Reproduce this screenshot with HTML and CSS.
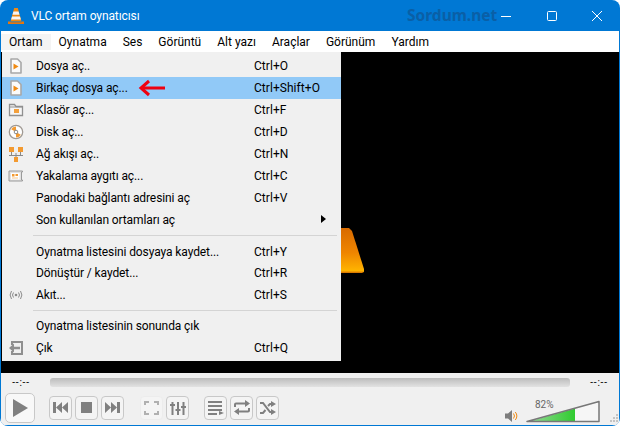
FILE: index.html
```html
<!DOCTYPE html>
<html lang="tr">
<head>
<meta charset="utf-8">
<title>VLC ortam oynatıcısı</title>
<link rel="stylesheet" href="styles.css">
</head>
<body>
<div class="window">
  <header class="titlebar">
    <svg class="app-icon" width="16" height="18" viewBox="0 0 16 18"><path d="M6.200 1h3.600l3.700 13.500h-11z" fill="#f08a12"/><path d="M5.400 4.500h5.200l.9 3.200h-7zM4 9.500h8l.9 3H3.100z" fill="#f6f6f6"/><path d="M0 14.500h2.500v.8h11v-.8H16V17H0z" fill="#e8760c"/></svg>
    <span class="title">VLC ortam oynatıcısı</span>
    <span class="watermark">Sordum.net</span>
    <div class="winbtns">
      <svg width="12" height="12" viewBox="0 0 12 12"><path d="M1 6.500h10" stroke="#fff" fill="none"/></svg>
      <svg width="12" height="12" viewBox="0 0 12 12"><rect x="1.500" y="1.500" width="9" height="9" rx="1" stroke="#fff" fill="none"/></svg>
      <svg width="12" height="12" viewBox="0 0 12 12"><path d="M1 1l10 10M11 1L1 11" stroke="#fff" fill="none"/></svg>
    </div>
  </header>
  <nav class="menubar">
    <span class="mb-item active">Ortam</span><span class="mb-item">Oynatma</span><span class="mb-item">Ses</span><span class="mb-item">Görüntü</span><span class="mb-item">Alt yazı</span><span class="mb-item">Araçlar</span><span class="mb-item">Görünüm</span><span class="mb-item">Yardım</span>
  </nav>
  <main class="video">
    <div class="cone"></div>
    <div class="menu">
      <div class="row"><span class="ico"><svg width="16" height="16" viewBox="0 0 16 16"><path d="M3 1h6.500L13 4.500V15H3z" fill="#fbfbfb" stroke="#a8a8a8" stroke-width="1.600" stroke-linejoin="round"/><path d="M5.500 5.500l5 3-5 3z" fill="#f08a12"/></svg></span><span class="lbl">Dosya aç..</span><span class="key">Ctrl+O</span></div>
      <div class="row hi"><span class="ico"><svg width="16" height="16" viewBox="0 0 16 16"><path d="M3 1h6.500L13 4.500V15H3z" fill="#fbfbfb" stroke="#a8a8a8" stroke-width="1.600" stroke-linejoin="round"/><path d="M5.500 5.500l5 3-5 3z" fill="#f08a12"/></svg></span><span class="lbl">Birkaç dosya aç...</span><span class="key">Ctrl+Shift+O</span>
        <svg class="arrow" width="28" height="18" viewBox="0 0 28 18"><path d="M27 9H5" fill="none" stroke="#ee0010" stroke-width="3"/><path d="M11 2L3 9l8 7" fill="none" stroke="#ee0010" stroke-width="3"/></svg></div>
      <div class="row"><span class="ico"><svg width="16" height="16" viewBox="0 0 16 16"><path d="M1.500 2.500h5l1.500 2h6.500v9h-13z" fill="#f6f6f6" stroke="#909090" stroke-width="1.300"/><path d="M1.500 5h13" stroke="#909090"/><rect x="6" y="7" width="5" height="4" fill="#f3a03c"/></svg></span><span class="lbl">Klasör aç...</span><span class="key">Ctrl+F</span></div>
      <div class="row"><span class="ico"><svg width="16" height="16" viewBox="0 0 16 16"><circle cx="8" cy="8" r="6.700" fill="#fff" stroke="#a09a94" stroke-width="1.300"/><path d="M8 8L3.200 5.200A5.500 5.500 0 0 1 8 2.500zM8 8l4.800 2.800A5.500 5.500 0 0 1 8 13.500z" fill="#f39a30"/><circle cx="8" cy="8" r="1.800" fill="#fff" stroke="#8a8a8a"/></svg></span><span class="lbl">Disk aç...</span><span class="key">Ctrl+D</span></div>
      <div class="row"><span class="ico"><svg width="16" height="16" viewBox="0 0 16 16"><path d="M8 7v5M1 9.500h14M3.500 6v3.500M12.500 6v3.500" stroke="#8a8a8a" fill="none"/><rect x="1" y="1" width="5" height="5" fill="#f39a30"/><rect x="10" y="1" width="5" height="5" fill="#f39a30"/><rect x="6" y="11" width="4" height="5" fill="#f39a30"/></svg></span><span class="lbl">Ağ akışı aç..</span><span class="key">Ctrl+N</span></div>
      <div class="row"><span class="ico"><svg width="16" height="16" viewBox="0 0 16 16"><path d="M1 3h13.500v1h-1v8h1v1H1z" fill="#e2e2e2" stroke="#9a9a9a"/><rect x="3" y="5" width="8.500" height="6.500" fill="#fff"/><rect x="4" y="6" width="2.500" height="2.500" fill="#f39a30"/><rect x="7.500" y="6" width="2.500" height="2" fill="#f39a30"/><rect x="4" y="9.500" width="6" height="1" fill="#f8c88c"/></svg></span><span class="lbl">Yakalama aygıtı aç...</span><span class="key">Ctrl+C</span></div>
      <div class="row"><span class="ico"></span><span class="lbl">Panodaki bağlantı adresini aç</span><span class="key">Ctrl+V</span></div>
      <div class="row"><span class="ico"></span><span class="lbl">Son kullanılan ortamları aç</span><span class="key"></span><span class="sub"></span></div>
      <div class="sep"></div>
      <div class="row"><span class="ico"></span><span class="lbl">Oynatma listesini dosyaya kaydet...</span><span class="key">Ctrl+Y</span></div>
      <div class="row"><span class="ico"></span><span class="lbl">Dönüştür / kaydet...</span><span class="key">Ctrl+R</span></div>
      <div class="row"><span class="ico"><svg width="16" height="16" viewBox="0 0 16 16"><circle cx="8" cy="8" r="1.300" fill="#8a8a8a"/><path d="M5.500 5.500a4 4 0 0 0 0 5M10.500 5.500a4 4 0 0 1 0 5M3.500 4a7 7 0 0 0 0 8M12.500 4a7 7 0 0 1 0 8" fill="none" stroke="#8a8a8a"/></svg></span><span class="lbl">Akıt...</span><span class="key">Ctrl+S</span></div>
      <div class="sep sep2"></div>
      <div class="row"><span class="ico"></span><span class="lbl">Oynatma listesinin sonunda çık</span><span class="key"></span></div>
      <div class="row"><span class="ico"><svg width="16" height="16" viewBox="0 0 16 16"><path d="M4 5V2h10v12H4v-3" fill="none" stroke="#8f8f8f" stroke-width="2"/><path d="M12 6.800H6V3.500L1 8l5 4.500V9.200h6z" fill="#8f8f8f"/></svg></span><span class="lbl">Çık</span><span class="key">Ctrl+Q</span></div>
    </div>
  </main>
  <section class="controls">
    <div class="seekrow">
      <span class="time">--:--</span>
      <div class="seek"></div>
      <span class="time">--:--</span>
    </div>
    <div class="btnrow">
      <button class="btn play"><svg width="15" height="18" viewBox="0 0 15 18"><path d="M0 0l15 9-15 9z" fill="#808080"/></svg></button>
      <div class="group g1">
        <button class="btn"><svg width="15" height="11" viewBox="0 0 15 11"><path d="M0 0h3v11H0zM3 5.500L9 0v11zM9 5.500L15 0v11z" fill="#808080"/></svg></button>
        <button class="btn"><svg width="11" height="11" viewBox="0 0 11 11"><rect width="11" height="11" fill="#808080"/></svg></button>
        <button class="btn"><svg width="15" height="11" viewBox="0 0 15 11"><path d="M15 0h-3v11h3zM12 5.500L6 0v11zM6 5.500L0 0v11z" fill="#808080"/></svg></button>
      </div>
      <div class="group g2">
        <button class="btn dim"><svg width="15" height="14" viewBox="0 0 15 14"><path d="M1 4V1h4M10 1h4v3M14 10v3h-4M5 13H1v-3" fill="none" stroke="#b0b0b0" stroke-width="2"/></svg></button>
        <button class="btn"><svg width="16" height="14" viewBox="0 0 16 14"><path d="M2.500 1v13M8 1v13M13.500 1v13" stroke="#808080" stroke-width="2"/><path d="M0 3h5v2H0zM5.500 8h5v2h-5zM11 5h5v2h-5z" fill="#808080"/></svg></button>
      </div>
      <div class="group g3">
        <button class="btn"><svg width="16" height="14" viewBox="0 0 16 14"><path d="M0 0h14v2H0zM0 4h14v2H0zM0 8h14v2H0zM0 12h9v2H0z" fill="#808080"/><path d="M11 10l5 2-5 2z" fill="#808080"/></svg></button>
        <button class="btn"><svg width="16" height="15" viewBox="0 0 16 15"><path d="M1 7V4.500Q1 3.500 2 3.500h10M15 8v2.500q0 1-1 1H4" fill="none" stroke="#808080" stroke-width="2"/><path d="M11 0l5 3.500-5 3.500zM5 8l-5 3.500L5 15z" fill="#808080"/></svg></button>
        <button class="btn"><svg width="16" height="14" viewBox="0 0 16 14"><path d="M0 2h3l7 9h3M0 12h3l2.500-3M8 5l2-2h3" fill="none" stroke="#808080" stroke-width="2"/><path d="M11 0l5 3-5 3zM11 8l5 3-5 3z" fill="#808080"/></svg></button>
      </div>
      <div class="volume">
        <svg class="spk" width="13" height="14" viewBox="0 0 13 14"><path d="M0 4.500h3L7 1v12L3 9.500H0z" fill="#7d7d7d"/><path d="M8.500 4.500a4 4 0 0 1 0 5M10.300 3a6.500 6.500 0 0 1 0 8" fill="none" stroke="#f08a12"/></svg>
        <div class="volbar">
          <svg width="75" height="23" viewBox="0 0 75 23">
            <defs><linearGradient id="vg" x1="0" x2="1" y1="0" y2="0"><stop offset="0" stop-color="#9bd99b"/><stop offset="1" stop-color="#2fcb2f"/></linearGradient></defs>
            <path d="M1 22L73 1.500V22z" fill="#f6f6f6"/>
            <path d="M1 22L49 8.500V22z" fill="url(#vg)"/>
            <path d="M1 21.500L73 1.500V21.500z" fill="none" stroke="#777" stroke-width="1.500" stroke-linejoin="round"/>
          </svg>
          <span class="volpct">82%</span>
        </div>
        <svg class="grip" width="9" height="9" viewBox="0 0 9 9"><path d="M6 0h2v2H6zM3 3h2v2H3zM6 3h2v2H6zM0 6h2v2H0zM3 6h2v2H3zM6 6h2v2H6z" fill="#c4c4c4"/></svg>
      </div>
    </div>
  </section>
</div>
</body>
</html>
```
FILE: styles.css
```css
* { box-sizing: border-box; }
html, body { margin: 0; padding: 0; background: #fff; }
body { width: 620px; height: 426px; overflow: hidden; font: 12px/16px Roboto, sans-serif; color: #000; }
.window { width: 620px; height: 426px; display: flex; flex-direction: column; background: #0078d4; border-radius: 8px 8px 8px 8px; overflow: hidden; padding: 0 1px 1px; }
.titlebar { height: 31px; flex: none; display: flex; align-items: center; color: #fff; padding-left: 7px; position: relative; }
.app-icon { margin-right: 7px; }
.title { font-size: 12px; letter-spacing: -.1px; }
.watermark { position: absolute; left: 406px; top: 6px; font: bold 15.500px/18px "Noto Sans", sans-serif; color: #0a5fa6; }
.winbtns { margin-left: auto; display: flex; gap: 33.500px; padding-right: 16px; }
.winbtns svg { display: block; }
.menubar { height: 21px; flex: none; background: #fff; display: flex; align-items: center; padding-top: 1px; }
.mb-item { padding: 0 8px; }
.mb-item.active { background: #f4f4f4; }
.video { height: 321px; flex: none; background: #000; position: relative; }
.cone { position: absolute; left: 300px; top: 176px; width: 63px; height: 45px; background: linear-gradient(#d86a00, #ef8500 55%, #ffb400 95%, #d06a00); clip-path: polygon(0 0, 48px 0, 51px 3px, 63px 41px, 63px 44px, 61px 45px, 0 45px); }
.menu { position: absolute; left: 1px; top: 0; width: 339px; height: 309px; background: #f0f0f0; padding-top: 3px; }
.row { height: 21.900px; display: flex; align-items: center; padding-left: 6px; position: relative; padding-top: 1px; }
.row.hi { background: #91c9f7; }
.ico { width: 16px; height: 16px; margin-right: 12px; flex: none; }
.ico svg { display: block; }
.lbl { width: 218px; flex: none; white-space: nowrap; letter-spacing: -.1px; }
.key { white-space: nowrap; letter-spacing: .05px; }
.arrow { position: absolute; left: 136px; top: 2px; }
.sub { position: absolute; left: 319px; top: 7px; width: 0; height: 0; border-left: 5px solid #000; border-top: 4px solid transparent; border-bottom: 4px solid transparent; }
.sep { height: 1px; margin: 5px 4px 4px 31px; background: #d4d4d4; }
.sep2 { margin: 4px 4px 4px 31px; }
.controls { flex: 1; background: #f0f0f0; display: flex; flex-direction: column; }
.seekrow { height: 19px; display: flex; align-items: center; padding: 0 10px; font-size: 10px; }
.time { width: 20px; text-align: center; flex: none; padding-top: 1px; letter-spacing: .8px; }
.seek { margin: 0 19px 1px 19px; flex: 1; height: 9px; border-radius: 3px; background: linear-gradient(#bcbcbc, #e2e2e2); }
.btnrow { display: flex; align-items: center; padding-left: 4px; flex: 1; padding-bottom: 2px; }
.btn { width: 23px; height: 24px; padding: 0; background: #f4f4f4; border: 1px solid #c8c8c8; border-radius: 4px; display: flex; align-items: center; justify-content: center; }
.btn svg { display: block; }
.btn.play { width: 30px; height: 30px; border-radius: 5px; background: #f8f8f8; }
.btn.dim { border-color: #ececec; }
.group { display: flex; gap: 3px; }
.g1 { margin-left: 14px; }
.g2 { margin-left: 16px; }
.g3 { margin-left: 15px; }
.volume { margin-left: auto; display: flex; align-items: flex-end; align-self: stretch; position: relative; }
.spk { margin: 0 8px 0 0; }
.volbar { position: relative; width: 75px; height: 23px; margin-right: 9px; }
.volbar svg { display: block; }
.volpct { position: absolute; left: 9px; top: -3px; font-size: 10px; color: #666; }
.grip { margin-bottom: 0; margin-right: 0; }
```
